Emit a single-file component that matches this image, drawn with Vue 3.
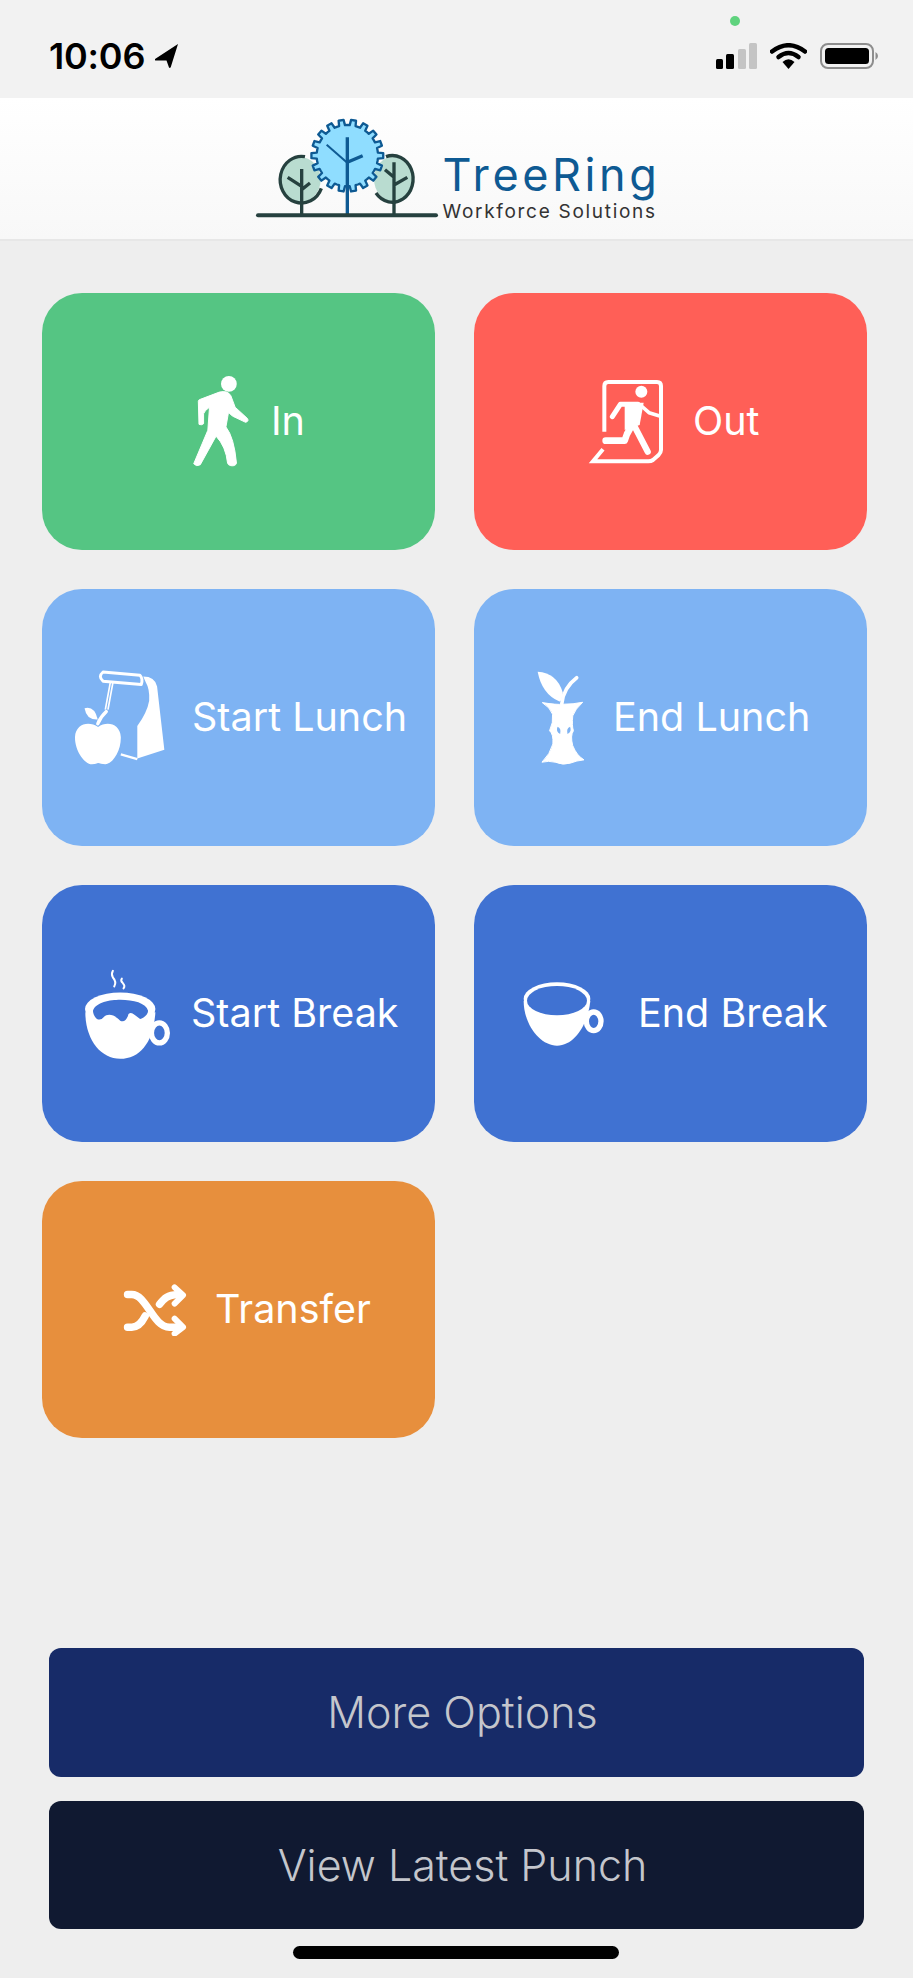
<template>
  <div class="page">
    <!-- status bar -->
    <div class="status">
      <span class="dot"></span>
      <span class="time">10:06</span>
      <svg class="arrow" width="23" height="24" viewBox="0 0 23 24">
        <path d="M23 0 L0 15 Q-1 16.500 1 16.500 L11.500 16.500 L14 23.500 Q15 24.500 15.800 23 Z" fill="#000" />
      </svg>
      <div class="status-right">
        <svg width="41" height="26" viewBox="0 0 41 26">
          <rect x="0" y="16" width="7" height="10" rx="1.500" fill="#000" />
          <rect x="10" y="11" width="8" height="15" rx="1.500" fill="#000" />
          <rect x="22" y="6" width="8" height="20" rx="1.500" fill="#c4c4c4" />
          <rect x="33" y="0" width="8" height="26" rx="1.500" fill="#c4c4c4" />
        </svg>
        <svg width="37" height="26" viewBox="0 0 37 26">
          <path d="M2 8.500 Q18.500 -4 35 8.500" fill="none" stroke="#000" stroke-width="4.500" stroke-linecap="round" />
          <path d="M8.500 14 Q18.500 6 28.500 14" fill="none" stroke="#000" stroke-width="4.500" stroke-linecap="round" />
          <path d="M12.500 19 Q18.500 13.500 24.500 19 L18.500 26 Z" fill="#000" />
        </svg>
        <svg width="58" height="26" viewBox="0 0 58 26">
          <rect x="1" y="1" width="52" height="24" rx="7" fill="none" stroke="#8e8e8e" stroke-width="2" />
          <rect x="5" y="5" width="44" height="16" rx="3.500" fill="#000" />
          <path d="M55.500 9 Q58 10.500 58 13 Q58 15.500 55.500 17 Z" fill="#8e8e8e" />
        </svg>
      </div>
    </div>

    <!-- logo header -->
    <header class="header">
      <svg class="logo" width="184" height="120" viewBox="15 0 552 360">
        <ellipse cx="150" cy="212" rx="62" ry="68" fill="#b9dcd0" />
        <ellipse cx="432" cy="210" rx="60" ry="68" fill="#b9dcd0" />
        <path d="M165 143 A64 70 0 1 0 214 238" fill="none" stroke="#26413f" stroke-width="10" />
        <path d="M408 143 A62 70 0 1 1 378 252" fill="none" stroke="#26413f" stroke-width="10" />
        <path d="M155 180 V318 M113 205 L155 232 M155 242 L180 222" fill="none" stroke="#26413f" stroke-width="10" />
        <path d="M432 160 V318 M405 182 L432 205 M432 228 L472 205" fill="none" stroke="#26413f" stroke-width="10" />
        <path :d="gearPath" fill="#8fddff" stroke="#0e5a93" stroke-width="7" stroke-linejoin="round" />
        <path d="M292 85 V316 M292 160 L338 140" fill="none" stroke="#0e5a93" stroke-width="10" />
        <path d="M230 107 L290 160" fill="none" stroke="#0e5a93" stroke-width="6" />
        <path d="M24 319 H558" fill="none" stroke="#26413f" stroke-width="12" stroke-linecap="round" />
      </svg>
      <div class="brand">
        <div class="brand-name">TreeRing</div>
        <div class="brand-sub">Workforce Solutions</div>
      </div>
    </header>

    <main class="tiles">
      <button class="tile green t-in">
        <svg width="56" height="92" viewBox="100 75 170 280">
          <circle cx="209" cy="99" r="24" fill="#fff" />
          <path d="M118 222 L116 152 Q116 148 122 146 L180 124 Q205 118 215 135 L228 170 L264 203 Q272 212 260 216 L222 198 Q212 192 208 185 L200 230 Q225 262 232 340 Q230 350 215 348 Q206 346 205 340 Q200 290 170 258 L122 345 Q110 352 102 342 L145 240 L150 170 Q135 180 132 190 L132 220 Q125 226 118 222 Z" fill="#fff" stroke="#fff" stroke-width="3" stroke-linejoin="round" />
        </svg>
        <span>In</span>
      </button>

      <button class="tile red t-out">
        <svg width="75" height="84" viewBox="55 60 225 252">
          <path d="M104 215 V78 Q104 66 116 66 H262 Q274 66 274 78 V270 Q274 278 266 286 L250 300 Q244 304 236 304 H70 L100 268" fill="none" stroke="#fff" stroke-width="12" />
          <circle cx="215" cy="95" r="18" fill="#fff" />
          <path d="M165 128 L222 128 L210 195 L165 210 Z" fill="#fff" />
          <path d="M128 170 L152 133 H205" fill="none" stroke="#fff" stroke-width="15" stroke-linecap="round" stroke-linejoin="round" />
          <path d="M212 135 L238 158 L270 168" fill="none" stroke="#fff" stroke-width="11" stroke-linejoin="round" />
          <path d="M190 190 L172 222 L165 242 H108" fill="none" stroke="#fff" stroke-width="20" stroke-linecap="round" stroke-linejoin="round" />
          <path d="M190 190 L234 275" fill="none" stroke="#fff" stroke-width="19" stroke-linecap="round" />
        </svg>
        <span>Out</span>
      </button>

      <button class="tile sky t-slunch">
        <svg width="91" height="97" viewBox="40 60 276 292">
          <path d="M113 235 C85 215 45 225 43 265 C42 310 75 350 95 348 C105 348 110 344 113 344 C118 344 125 348 135 348 C160 345 183 305 182 265 C180 225 140 215 113 235 Z" fill="#fff" />
          <path d="M112 225 Q120 205 138 188" fill="none" stroke="#fff" stroke-width="10" stroke-linecap="round" />
          <path d="M72 178 Q102 170 112 212 Q78 214 72 178 Z" fill="#fff" />
          <path d="M150 100 L135 182 M158 100 L143 182" fill="none" stroke="#fff" stroke-width="5" />
          <path d="M128 68 L240 78 Q250 88 244 106 L128 96 Q112 82 128 68 Z" fill="none" stroke="#fff" stroke-width="9" stroke-linejoin="round" />
          <path d="M250 82 Q285 82 292 112 L314 304 L232 330 L232 232 Q262 190 268 155 Q270 120 258 100 Z" fill="#fff" />
          <path d="M182 318 L232 332" fill="none" stroke="#fff" stroke-width="7" />
        </svg>
        <span>Start Lunch</span>
      </button>

      <button class="tile sky t-elunch">
        <svg width="47" height="97" viewBox="50 55 142 290">
          <path d="M52 62 Q110 65 128 125 Q125 150 118 152 Q65 130 52 62 Z" fill="#fff" />
          <path d="M125 158 Q130 110 170 80" fill="none" stroke="#fff" stroke-width="11" stroke-linecap="round" />
          <path d="M66 155 Q110 162 128 160 Q160 160 188 154 Q165 175 158 195 Q155 225 160 240 Q150 255 158 285 Q170 315 192 328 Q170 330 150 338 Q128 345 105 335 Q85 330 65 335 Q90 310 98 280 Q100 250 88 240 Q100 215 97 190 Q90 170 66 155 Z" fill="#fff" stroke="#fff" stroke-width="3" />
          <path d="M112 228 Q124 232 120 250 Q106 244 112 228 Z M150 228 Q138 232 142 250 Q156 244 150 228 Z" fill="#7eb3f3" />
        </svg>
        <span>End Lunch</span>
      </button>

      <button class="tile blue t-sbreak">
        <svg width="85" height="90" viewBox="44 40 256 270">
          <ellipse cx="268" cy="232" rx="24" ry="30" fill="none" stroke="#fff" stroke-width="16" />
          <path d="M45 170 C45 250 90 310 150 310 C210 310 250 260 256 170 Z" fill="#fff" />
          <ellipse cx="150" cy="160" rx="106" ry="50" fill="#fff" />
          <path d="M68 165 C76 140 120 132 150 132 C190 132 228 142 234 165 C234 175 225 185 210 190 C195 180 185 165 175 175 C170 195 160 200 150 195 C135 180 115 170 100 185 Q92 195 80 190 C74 185 68 175 68 165 Z" fill="#4072d2" />
          <path d="M128 45 Q122 55 128 65 Q140 78 132 92 M155 68 Q150 75 158 82 Q166 90 160 98" fill="none" stroke="#fff" stroke-width="6" stroke-linecap="round" />
        </svg>
        <span>Start Break</span>
      </button>

      <button class="tile blue t-ebreak">
        <svg width="81" height="64" viewBox="40 54 243 192">
          <ellipse cx="252" cy="172" rx="22" ry="28" fill="none" stroke="#fff" stroke-width="16" />
          <path d="M42 110 C42 180 90 245 142 245 C195 245 235 180 242 110 Z" fill="#fff" />
          <ellipse cx="142" cy="105" rx="100" ry="50" fill="#fff" />
          <ellipse cx="142" cy="110" rx="90" ry="44" fill="#4072d2" />
        </svg>
        <span>End Break</span>
      </button>

      <button class="tile orange t-transfer">
        <svg width="64" height="53" viewBox="38 36 196 160">
          <path d="M52 70 H65 C110 70 130 170 180 170 H208" fill="none" stroke="#fff" stroke-width="23" stroke-linecap="round" />
          <path d="M52 170 H65 C85 170 98 152 106 136 M150 100 C165 80 175 72 205 70" fill="none" stroke="#fff" stroke-width="23" stroke-linecap="round" />
          <path d="M196 48 L222 72 L196 98 M196 144 L222 170 L196 190" fill="none" stroke="#fff" stroke-width="18" stroke-linecap="round" stroke-linejoin="round" />
        </svg>
        <span>Transfer</span>
      </button>
    </main>

    <footer class="footer">
      <button class="wide navy">More Options</button>
      <button class="wide dark">View Latest Punch</button>
      <div class="home"></div>
    </footer>
  </div>
</template>

<script setup>
import { computed } from 'vue'

// gear outline for the logo, rounded-ish teeth around a circle
const gearPath = computed(() => {
  const cx = 292
  const cy = 140
  const teeth = 18
  const outer = 108
  const inner = 92
  const step = (Math.PI * 2) / teeth
  let d = ''
  for (let i = 0; i < teeth; i++) {
    const a = i * step
    const pts = [
      [inner, a - step * 0.5],
      [inner, a - step * 0.28],
      [outer, a - step * 0.2],
      [outer, a + step * 0.2],
      [inner, a + step * 0.28],
    ]
    pts.forEach(([r, t], j) => {
      const x = (cx + r * Math.cos(t)).toFixed(1)
      const y = (cy + r * Math.sin(t)).toFixed(1)
      d += `${i === 0 && j === 0 ? 'M' : 'L'}${x} ${y} `
    })
  }
  return d + 'Z'
})
</script>

<style>
html,
body {
  margin: 0;
  background: #eeeeee;
}
</style>

<style scoped>
.page {
  width: 913px;
  height: 1978px;
  display: flex;
  flex-direction: column;
  background: #eeeeee;
  font-family: Inter, "Liberation Sans", sans-serif;
}

/* status bar */
.status {
  position: relative;
  height: 98px;
  box-sizing: border-box;
  padding: 38px 35px 0 49px;
  display: flex;
  align-items: flex-start;
  background: #f2f2f2;
}
.dot {
  position: absolute;
  left: 730px;
  top: 16px;
  width: 10px;
  height: 10px;
  border-radius: 50%;
  background: #5fd37e;
}
.time {
  font-size: 36px;
  line-height: 36px;
  font-weight: 600;
  color: #000;
  letter-spacing: -0.2px;
}
.arrow {
  margin: 6px 0 0 10px;
}
.status-right {
  margin-left: auto;
  margin-top: 5px;
  display: flex;
  gap: 13px;
}

/* header */
.header {
  height: 143px;
  box-sizing: border-box;
  padding-left: 3px;
  display: flex;
  align-items: center;
  justify-content: center;
  background: linear-gradient(#ffffff, #f8f8f8);
  border-bottom: 2px solid #e7e7e7;
}
.brand {
  margin-left: 3px;
  padding-top: 38px;
}
.brand-name {
  font-size: 45px;
  line-height: 44px;
  color: #0e5a93;
  letter-spacing: 3.6px;
}
.brand-sub {
  margin-top: 4px;
  font-size: 19px;
  line-height: 22px;
  color: #333333;
  letter-spacing: 1.7px;
}

/* tiles */
.tiles {
  padding: 52px 0 0 42px;
  display: grid;
  grid-template-columns: 393px 393px;
  grid-auto-rows: 257px;
  gap: 39px;
}
.tile {
  display: flex;
  align-items: center;
  border: 0;
  border-radius: 40px;
  color: #fff;
  font-family: inherit;
  font-size: 39.5px;
  text-align: left;
}
.tile span {
  margin-top: -2px;
}
.green { background: #55c583; }
.red { background: #ff5f57; }
.sky { background: #7eb3f3; }
.blue { background: #4072d2; }
.orange { background: #e78f3d; }
.t-in { padding-left: 151px; gap: 22px; }
.t-out { padding-left: 114px; gap: 30px; }
.t-slunch { padding-left: 32px; gap: 27px; }
.t-elunch { padding-left: 63px; gap: 29px; }
.t-sbreak { padding-left: 43px; gap: 21px; }
.t-ebreak { padding-left: 49px; gap: 34px; }
.t-transfer { padding-left: 81px; gap: 28px; }

/* bottom buttons */
.footer {
  margin-top: auto;
  padding: 0 49px 19px;
  display: flex;
  flex-direction: column;
}
.wide {
  height: 129px;
  padding: 0 0 1px 12px;
  border: 0;
  border-radius: 12px;
  color: #c4c6cc;
  font-family: inherit;
  font-size: 43px;
  font-weight: 350;
}
.navy { background: #172b68; }
.dark {
  margin-top: 24px;
  height: 128px;
  background: #101931;
}
.home {
  align-self: center;
  margin: 17px 0 0 -2px;
  width: 326px;
  height: 13px;
  border-radius: 7px;
  background: #000;
}
</style>
